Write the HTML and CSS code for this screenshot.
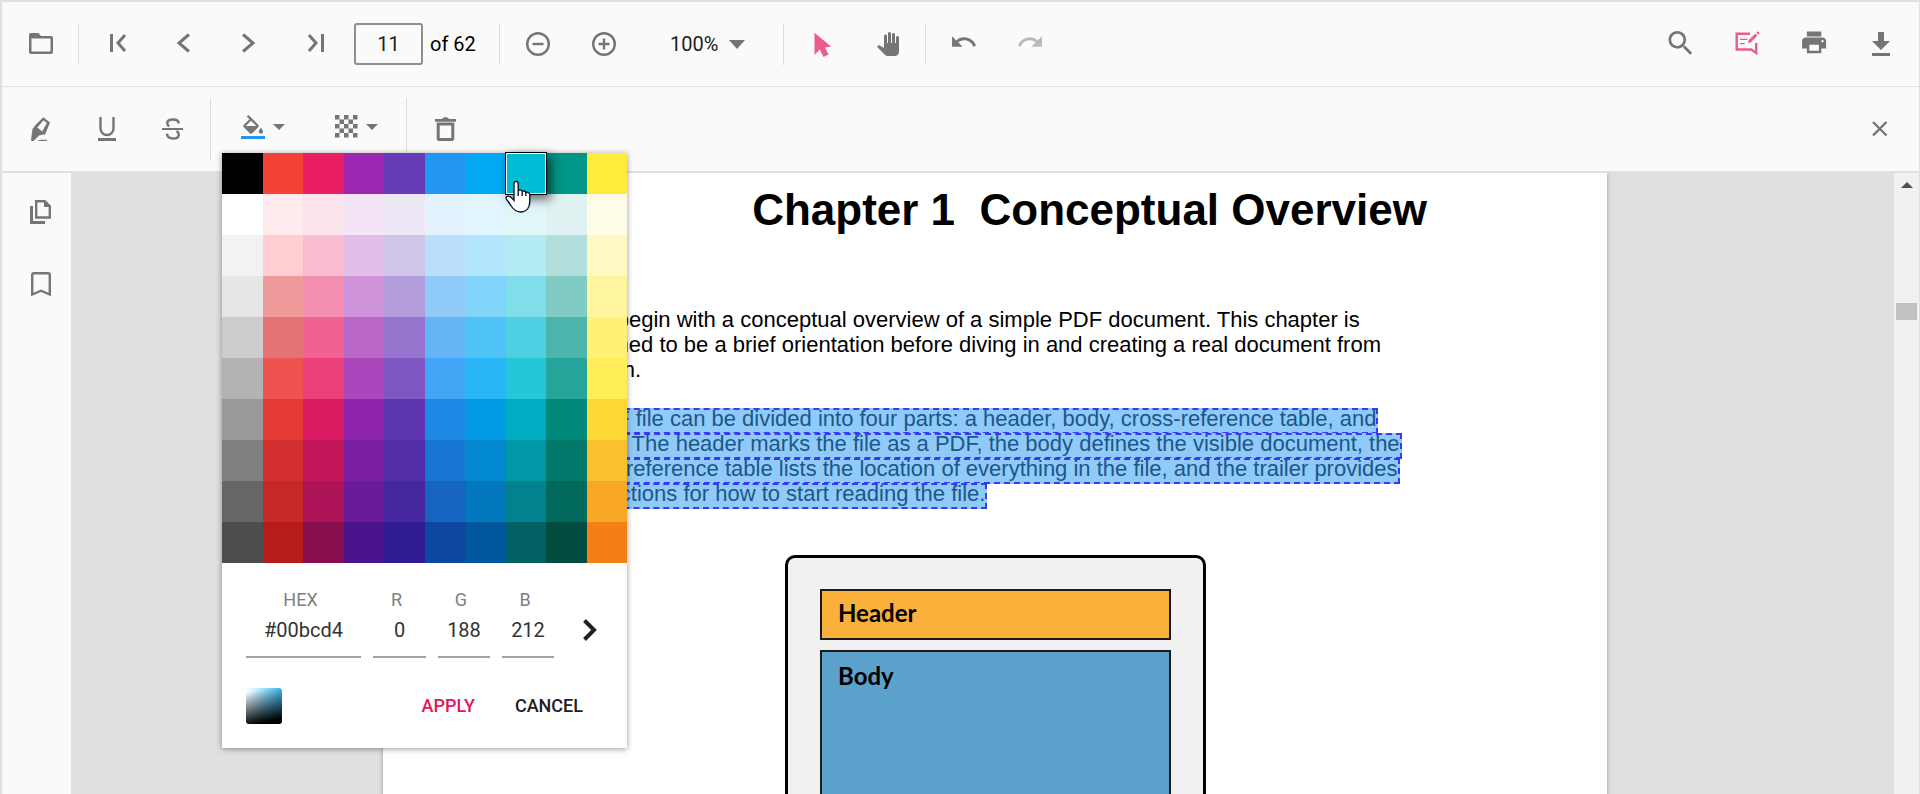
FILE: index.html
```html
<!DOCTYPE html>
<html lang="en">
<head>
<meta charset="utf-8">
<title>PDF Viewer</title>
<link rel="stylesheet" href="styles.css">
</head>
<body>
<div class="app">
  <div class="toolbar" role="toolbar" aria-label="Main toolbar">
    <button class="tool" aria-label="Open"><svg class="icon" viewBox="0 0 32 32"><path fill-rule="evenodd" d="M6 5h7.500l2.500 3h10a2 2 0 0 1 2 2v14a2 2 0 0 1-2 2H6a2 2 0 0 1-2-2V7a2 2 0 0 1 2-2zM6.500 10.500v13h19v-13z"/></svg></button>
    <span class="sep"></span>
    <button class="tool" aria-label="First page"><svg class="icon" viewBox="0 0 32 32"><path d="M9 6h3v18H9z"/><path class="line" d="M24 7l-7 8 7 8"/></svg></button>
    <button class="tool" aria-label="Previous page"><svg class="icon" viewBox="0 0 32 32"><path class="line" d="M22 6.500 12 15l10 8.500"/></svg></button>
    <button class="tool" aria-label="Next page"><svg class="icon" viewBox="0 0 32 32"><path class="line" d="M10 6.500 20 15l-10 8.500"/></svg></button>
    <button class="tool" aria-label="Last page"><svg class="icon" viewBox="0 0 32 32"><path d="M22 6h3v18h-3z"/><path class="line" d="M10 7l7 8-7 8"/></svg></button>
    <input class="page-input" id="page" type="text" value="11">
    <label class="page-total" for="page">of 62</label>
    <span class="sep"></span>
    <button class="tool" aria-label="Zoom out"><svg class="icon" viewBox="0 0 32 32"><circle class="thin" cx="16" cy="16" r="10.800"/><path class="thin" d="M10.500 16h11"/></svg></button>
    <button class="tool" aria-label="Zoom in"><svg class="icon" viewBox="0 0 32 32"><circle class="thin" cx="16" cy="16" r="10.800"/><path class="thin" d="M10.500 16h11M16 10.500v11"/></svg></button>
    <button class="zoom">100%<svg class="zoom-caret" viewBox="0 0 16 10"><path d="M0 1h16L8 10z"/></svg></button>
    <span class="sep"></span>
    <button class="tool active" aria-label="Select text"><svg class="icon" viewBox="0 0 32 32"><path d="M8.500 4.700 25 18.500l-6 1L22.500 26.500l-5 2.500-3.700-7.500-5.300 5.500z"/></svg></button>
    <button class="tool" aria-label="Pan"><svg class="icon" viewBox="0 0 32 32"><path transform="translate(4 4)" d="M23 5.500V20c0 2.200-1.800 4-4 4h-7.300c-1.080 0-2.100-.43-2.850-1.190L1 14.830s1.260-1.230 1.300-1.250c.22-.19.49-.29.79-.29.22 0 .42.06.6.16.04.01 4.310 2.460 4.310 2.460V4c0-.83.67-1.500 1.500-1.500S11 3.170 11 4v7h1V1.500c0-.83.67-1.500 1.500-1.500S15 .67 15 1.500V11h1V2.500c0-.83.67-1.500 1.500-1.500s1.500.67 1.500 1.500V11h1V5.500c0-.83.67-1.500 1.500-1.500s1.500.67 1.500 1.500z"/></svg></button>
    <span class="sep"></span>
    <button class="tool" aria-label="Undo"><svg class="icon" viewBox="0 0 32 32"><path transform="translate(1.700 0) scale(1.170)" d="M12.500 8c-2.650 0-5.050.99-6.900 2.600L2 7v9h9l-3.620-3.620c1.390-1.160 3.160-1.880 5.120-1.880 3.540 0 6.550 2.310 7.600 5.500l2.370-.78C21.080 11.030 17.150 8 12.500 8z"/></svg></button>
    <button class="tool" aria-label="Redo" disabled><svg class="icon" viewBox="0 0 32 32"><path transform="translate(2.200 0) scale(1.170)" d="M18.400 10.600C16.550 8.990 14.150 8 11.500 8c-4.650 0-8.580 3.030-9.960 7.220L3.900 16c1.050-3.190 4.050-5.500 7.600-5.500 1.950 0 3.730.72 5.120 1.880L13 16h9V7l-3.600 3.600z"/></svg></button>
    <div class="tools-end">
      <button class="tool" aria-label="Search"><svg class="icon" viewBox="0 0 32 32"><path transform="translate(.5 -1) scale(1.350)" d="M15.500 14h-.79l-.28-.27C15.410 12.590 16 11.110 16 9.500 16 5.910 13.090 3 9.500 3S3 5.910 3 9.500 5.910 16 9.500 16c1.610 0 3.090-.59 4.230-1.570l.27.28v.79l5 4.990L20.490 19l-4.990-5zm-6 0C7.010 14 5 11.990 5 9.500S7.010 5 9.500 5 14 7.010 14 9.500 11.990 14 9.500 14z"/></svg></button>
      <button class="tool active" aria-label="Edit annotations"><svg class="icon" viewBox="0 0 32 32"><path class="thin" d="M19 5.700H5.700v15.800h14.500l5 3.500V15"/><path d="M9 10.700h7.500v1.300H9zM9 15h4.500v1.300H9zM17 15l.7-3 6.600-6.300 2 2-6.400 6.500zM25.300 4.800l1.500-1.500 1.900 1.900-1.500 1.500z"/></svg></button>
      <button class="tool" aria-label="Print"><svg class="icon" viewBox="0 0 32 32"><path transform="translate(1.700 0) scale(1.200)" d="M19 8H5c-1.660 0-3 1.340-3 3v6h4v4h12v-4h4v-6c0-1.660-1.340-3-3-3zm-3 11H8v-5h8v5zm3-7c-.55 0-1-.45-1-1s.45-1 1-1 1 .45 1 1-.45 1-1 1zm-1-9H6v4h12V3z"/></svg></button>
      <button class="tool" aria-label="Download"><svg class="icon" viewBox="0 0 32 32"><path d="M13 4h6v9h6l-9 9-9-9h6zM7 25h18v3H7z"/></svg></button>
    </div>
  </div>

  <div class="toolbar annotation-bar" role="toolbar" aria-label="Annotation toolbar">
    <button class="tool" aria-label="Highlight"><svg class="icon" viewBox="0 0 32 32"><path fill-rule="evenodd" d="M18.300 4.200 25 9.600l-4.800 11.600-6.200 1.300L8.500 28H6.200v-2.500L7.500 16l3-4zM18.500 7.300 12.300 14.500l4.900 4 4.700-8.400zM15.500 26.800h6.300V28H12z"/></svg></button>
    <button class="tool" aria-label="Underline"><svg class="icon" viewBox="0 0 32 32"><path class="thin" d="M9.500 4v11.500a6.500 6.500 0 0 0 13 0V4"/><path d="M7 25h18v3H7z"/></svg></button>
    <button class="tool" aria-label="Strikethrough"><svg class="icon" viewBox="0 0 32 32"><path d="M5 15h21v2H5z"/><path class="thin" d="M21.800 10.500C21.500 7.500 19 6.500 16 6.500c-3.500 0-5.800 1.500-5.800 3.800 0 1.500.8 2.300 2 3M19.500 18.200c1.500.7 2.300 1.700 2.300 3.200 0 2.500-2.300 4.100-5.700 4.100-3.800 0-6-1.700-6.200-4.800"/></svg></button>
    <span class="sep tall"></span>
    <div class="picker">
      <button class="drop" aria-label="Colour" aria-expanded="true"><svg class="drop-icon" viewBox="0 0 24 24"><path transform="translate(-1 0) scale(1.100)" d="M16.560 8.940L7.620 0 6.210 1.410l2.380 2.380-5.150 5.150c-.59.59-.59 1.540 0 2.120l5.500 5.500c.29.29.68.44 1.060.44s.77-.15 1.060-.44l5.500-5.500c.59-.58.59-1.530 0-2.120zM5.210 10L10 5.210 14.790 10H5.210zM19 11.500s-2 2.170-2 3.500c0 1.100.9 2 2 2s2-.9 2-2c0-1.330-2-3.500-2-3.500z"/><path class="fill-colour" d="M0 21h24v3H0z"/></svg><svg class="caret" viewBox="0 0 12 6"><path d="M0 0h12L6 6z"/></svg></button>
      <div class="popup" role="dialog" aria-label="Colour picker">
        <div class="palette" id="palette"></div>
        <div class="popup-body">
          <div class="fields">
            <div class="field"><label for="hex">HEX</label><input id="hex" type="text" value="#00bcd4"></div>
            <div class="field"><label for="red">R</label><input id="red" type="text" value="0"></div>
            <div class="field"><label for="green">G</label><input id="green" type="text" value="188"></div>
            <div class="field"><label for="blue">B</label><input id="blue" type="text" value="212"></div>
            <button class="mode" aria-label="Switch colour format"><svg class="mode-icon" viewBox="0 0 26 26"><path d="M7.500 3.500 17 13l-9.500 9.500"/></svg></button>
          </div>
          <div class="actions">
            <button class="switcher" aria-label="Gradient mode"></button>
            <button class="action primary">APPLY</button>
            <button class="action">CANCEL</button>
          </div>
        </div>
        <svg class="pointer" viewBox="0 0 26 33"><path d="M9 16.500V3.800C9 .6 13.200.6 13.200 3.800V11c1-1.600 3.600-1.400 4 .5 1.200-1 3.200-.6 3.600 1 1.500-.8 4 0 4 2.300V21c0 7-3.600 11-9.300 11C10.500 32 8 29 5.500 25L1.300 18.800C.4 17 2.300 15.600 4.300 16.300c1.700.5 3 2 4.700 4zM13.200 11v5M17.200 11.500V16M20.800 12.500V16"/></svg>
      </div>
    </div>
    <button class="drop" aria-label="Opacity"><svg class="drop-icon" viewBox="0 0 24 24"><path transform="translate(1 0) scale(4.500)" d="M0 0h1v1H0zM2 0h1v1H2zM4 0h1v1H4zM1 1h1v1H1zM3 1h1v1H3zM0 2h1v1H0zM2 2h1v1H2zM4 2h1v1H4zM1 3h1v1H1zM3 3h1v1H3zM0 4h1v1H0zM2 4h1v1H2zM4 4h1v1H4z"/></svg><svg class="caret" viewBox="0 0 12 6"><path d="M0 0h12L6 6z"/></svg></button>
    <span class="sep tall"></span>
    <button class="tool" aria-label="Delete"><svg class="icon" viewBox="0 0 32 32"><path d="M6 6h7c1-2.500 6-2.500 7 0h7v2.700H6z"/><path class="line" d="M9.200 11h14.600v14.200q0 1.300-1.300 1.300h-12q-1.300 0-1.300-1.300z"/></svg></button>
    <div class="tools-end">
      <button class="tool" aria-label="Close"><svg class="icon" viewBox="0 0 32 32"><path class="thin" d="M8 9l13.500 13.500M21.500 9 8 22.500"/></svg></button>
    </div>
  </div>

  <div class="main">
    <nav class="sidebar" aria-label="Panels">
      <button class="side" aria-label="Thumbnails"><svg class="icon" viewBox="0 0 32 32"><path class="line" d="M6.500 10v16.500H20"/><path class="thin" d="M11.200 5.200h8.500l5.100 5.100v11.200H11.200z"/><path d="M19 4.500l6.500 6.500H19z"/></svg></button>
      <button class="side" aria-label="Bookmarks"><svg class="icon" viewBox="0 0 32 32"><path class="thin" d="M7.200 26.500V7q0-1.700 1.700-1.700h14.200q1.700 0 1.700 1.700v19.500L16 22.700z"/></svg></button>
    </nav>
    <div class="viewer">
      <article class="page">
        <h1 class="title">Chapter 1 &nbsp;Conceptual Overview</h1>
        <p class="text">We'll begin with a conceptual overview of a simple PDF document. This chapter is<br>designed to be a brief orientation before diving in and creating a real document from<br>scratch.</p>
        <p class="marked"><span class="mark">A PDF file can be divided into four parts: a header, body, cross-reference table, and</span><span class="mark">trailer. The header marks the file as a PDF, the body defines the visible document, the</span><span class="mark">cross-reference table lists the location of everything in the file, and the trailer provides</span><span class="mark">instructions for how to start reading the file.</span></p>
        <figure class="figure">
          <div class="part header-part">Header</div>
          <div class="part body-part">Body</div>
        </figure>
      </article>
      <div class="scrollbar"><svg class="scroll-up" viewBox="0 0 12 6"><path d="M0 6 6 0l6 6z"/></svg><div class="thumb"></div></div>
    </div>
  </div>
</div>
<script src="script.js"></script>
</body>
</html>
```
FILE: styles.css
```css
* { box-sizing: border-box; }

body {
  margin: 0;
  overflow: hidden;
  background: #fff;
  color: #212121;
  font-family: Roboto, "Liberation Sans", sans-serif;
}

button {
  margin: 0;
  padding: 0;
  border: 0;
  background: none;
  color: inherit;
  font-family: inherit;
}

svg { display: block; }

.app {
  display: flex;
  flex-direction: column;
  height: 100vh;
  overflow: hidden;
  border: solid #e0e0e0;
  border-width: 2px 1px 0 2px;
}

/* Toolbars */
.toolbar {
  display: flex;
  flex: none;
  align-items: center;
  height: 85px;
  padding: 0 5px 0 6px;
  border-bottom: 1px solid #e0e0e0;
  background: #fafafa;
}

.annotation-bar {
  height: 86px;
  border-bottom-width: 2px;
}

.tool {
  display: flex;
  flex: none;
  align-items: center;
  justify-content: center;
  width: 66px;
  height: 66px;
}

.tools-end {
  display: flex;
  gap: 1px;
  margin-left: auto;
}

.icon {
  width: 32px;
  height: 32px;
  fill: #757575;
}

.line,
.thin {
  fill: none;
  stroke: #757575;
  stroke-width: 3;
}

.thin { stroke-width: 2.4; }

.active .icon { fill: #ec5b8e; }
.active .thin { stroke: #ec5b8e; }
.tool:disabled .icon { fill: #bababa; }

.sep {
  flex: none;
  width: 1px;
  height: 41px;
  margin: 0 5px 0 4px;
  background: #dcdcdc;
}

.sep.tall { height: 62px; }

.page-input {
  width: 69px;
  height: 42px;
  margin-left: 6px;
  padding: 0;
  border: 2px solid #8e8e8e;
  border-radius: 3px;
  background: #fafafa;
  color: #212121;
  font: 20px Roboto, sans-serif;
  text-align: center;
}

.page-total {
  width: 65px;
  margin-left: 7px;
  color: #000;
  font-size: 20px;
}

.zoom {
  display: flex;
  align-items: center;
  gap: 11px;
  width: 142px;
  height: 66px;
  padding-left: 33px;
  font-size: 20px;
}

.zoom-caret {
  width: 16px;
  height: 10px;
  fill: #757575;
}

.picker { position: relative; }

.drop {
  display: flex;
  align-items: center;
  gap: 8px;
  width: 93px;
  height: 66px;
  padding: 0 0 4px 25px;
}

.drop-icon {
  width: 24px;
  height: 24px;
  fill: #757575;
}

.fill-colour { fill: #2196f3; }

.caret {
  width: 12px;
  height: 6px;
  fill: #757575;
}

/* Colour picker */
.popup {
  position: absolute;
  z-index: 5;
  top: 57px;
  left: 6px;
  width: 405px;
  background: #fff;
  box-shadow: 0 1px 6px rgba(0, 0, 0, .4);
}

.palette {
  display: grid;
  grid-template-columns: repeat(10, 1fr);
  grid-auto-rows: 41px;
}

.swatch.selected {
  z-index: 1;
  border: 1px solid #fff;
  outline: 1px solid #000;
  box-shadow: 4px 4px 10px 1px rgba(0, 0, 0, .6);
}

.popup-body { padding: 24px; }

.fields {
  display: grid;
  grid-template-columns: 115px 53px 52px 52px 1fr;
  column-gap: 12px;
  margin-bottom: 30px;
}

.field {
  display: flex;
  flex-direction: column;
}

.field label {
  padding-right: 6px;
  color: #808080;
  font-size: 18px;
  line-height: 26px;
  text-align: center;
}

.field input {
  width: 100%;
  height: 45px;
  padding: 0 0 9px;
  border: 0;
  border-bottom: 2px solid #a3a3a3;
  background: none;
  color: #333;
  font: 20px Roboto, sans-serif;
  text-align: center;
}

.mode {
  display: flex;
  align-items: center;
  justify-content: flex-end;
  height: 86px;
  margin-bottom: -15px;
}

.mode-icon {
  width: 26px;
  height: 26px;
  fill: none;
  stroke: #212121;
  stroke-width: 4;
}

.actions {
  display: flex;
  align-items: center;
}

.switcher {
  width: 36px;
  height: 36px;
  margin-right: auto;
  border-radius: 3px;
  background: linear-gradient(168deg, transparent 10%, #000 88%), linear-gradient(100deg, #fff, #4fc8ff 80%);
}

.action {
  padding: 0 20px;
  font-size: 18px;
  font-weight: 500;
  line-height: 36px;
}

.primary { color: #e3165b; }

.pointer {
  position: absolute;
  z-index: 2;
  top: 27px;
  left: 283px;
  width: 26px;
  height: 33px;
  fill: #fff;
  stroke: #10162f;
  stroke-width: 1.4;
}

/* Document area */
.main {
  display: flex;
  flex: 1;
  min-height: 0;
  background: #e0e0e0;
}

.sidebar {
  flex: none;
  width: 69px;
  padding: 3px 0 0 9px;
  background: #fafafa;
}

.side {
  display: flex;
  align-items: center;
  justify-content: center;
  width: 60px;
  height: 72px;
}

.viewer {
  position: relative;
  flex: 1;
  min-width: 0;
  overflow: hidden;
}

.page {
  max-width: 1224px;
  min-height: 100%;
  margin: 0 auto;
  padding: 12px 180px 0 181px;
  background: #fff;
  box-shadow: 0 0 4px rgba(0, 0, 0, .35);
  color: #000;
  font-family: "Liberation Sans", Arial, sans-serif;
}

.title {
  margin: 0;
  font-size: 44px;
  line-height: 50px;
  text-align: right;
  white-space: nowrap;
}

.text {
  margin: 72px 0 0;
  font-size: 22px;
  line-height: 25px;
  white-space: nowrap;
}

.marked {
  margin: 26px 0 0;
  color: #1b5788;
  font-size: 22px;
  line-height: 18px;
  white-space: nowrap;
}

.mark {
  display: block;
  width: fit-content;
  margin-bottom: -1px;
  padding-bottom: 4px;
  border: 2px dashed #3838f5;
  background: #90caf9;
}

.figure {
  width: 421px;
  height: 900px;
  margin: 47px 0 0 221px;
  padding: 31px 32px;
  border: 3px solid #000;
  border-radius: 10px;
  background: #f1f1f2;
  font-family: Lato, "Open Sans", sans-serif;
  font-size: 24px;
  font-weight: 700;
}

.part {
  padding: 9px 16px;
  border: 2px solid #1a1a1a;
  line-height: 29px;
}

.header-part {
  margin-bottom: 10px;
  padding: 7px 16px 11px;
  background: #fbb03b;
}

.body-part {
  height: 500px;
  background: #5ca0cc;
}

.scrollbar {
  position: absolute;
  top: 0;
  right: 0;
  bottom: 0;
  width: 25px;
  padding: 9px 2px;
  background: #f1f1f1;
}

.scroll-up {
  width: 12px;
  height: 6px;
  margin: 0 auto;
  fill: #505050;
}

.thumb {
  height: 17px;
  margin-top: 115px;
  background: #c1c1c1;
}
```
FILE: script.js
```javascript
const columns = [
  "000000 ffffff f2f2f2 e6e6e6 cccccc b3b3b3 999999 808080 666666 4d4d4d",
  "f44336 ffebee ffcdd2 ef9a9a e57373 ef5350 e53935 d32f2f c62828 b71c1c",
  "e91e63 fce4ec f8bbd0 f48fb1 f06292 ec407a d81b60 c2185b ad1457 880e4f",
  "9c27b0 f3e5f5 e1bee7 ce93d8 ba68c8 ab47bc 8e24aa 7b1fa2 6a1b9a 4a148c",
  "673ab7 ede7f6 d1c4e9 b39ddb 9575cd 7e57c2 5e35b1 512da8 4527a0 311b92",
  "2196f3 e3f2fd bbdefb 90caf9 64b5f6 42a5f5 1e88e5 1976d2 1565c0 0d47a1",
  "03a9f4 e1f5fe b3e5fc 81d4fa 4fc3f7 29b6f6 039be5 0288d1 0277bd 01579b",
  "00bcd4 e0f7fa b2ebf2 80deea 4dd0e1 26c6da 00acc1 0097a7 00838f 006064",
  "009688 e0f2f1 b2dfdb 80cbc4 4db6ac 26a69a 00897b 00796b 00695c 004d40",
  "ffeb3b fffde7 fff9c4 fff59d fff176 ffee58 fdd835 fbc02d f9a825 f57f17"
].map(column => column.split(" "));

const palette = document.getElementById("palette");
for (let row = 0; row < 10; row++) {
  for (const column of columns) {
    const colour = "#" + column[row];
    const button = document.createElement("button");
    button.className = colour === "#00bcd4" ? "swatch selected" : "swatch";
    button.style.backgroundColor = colour;
    button.setAttribute("aria-label", colour);
    palette.append(button);
  }
}
```
